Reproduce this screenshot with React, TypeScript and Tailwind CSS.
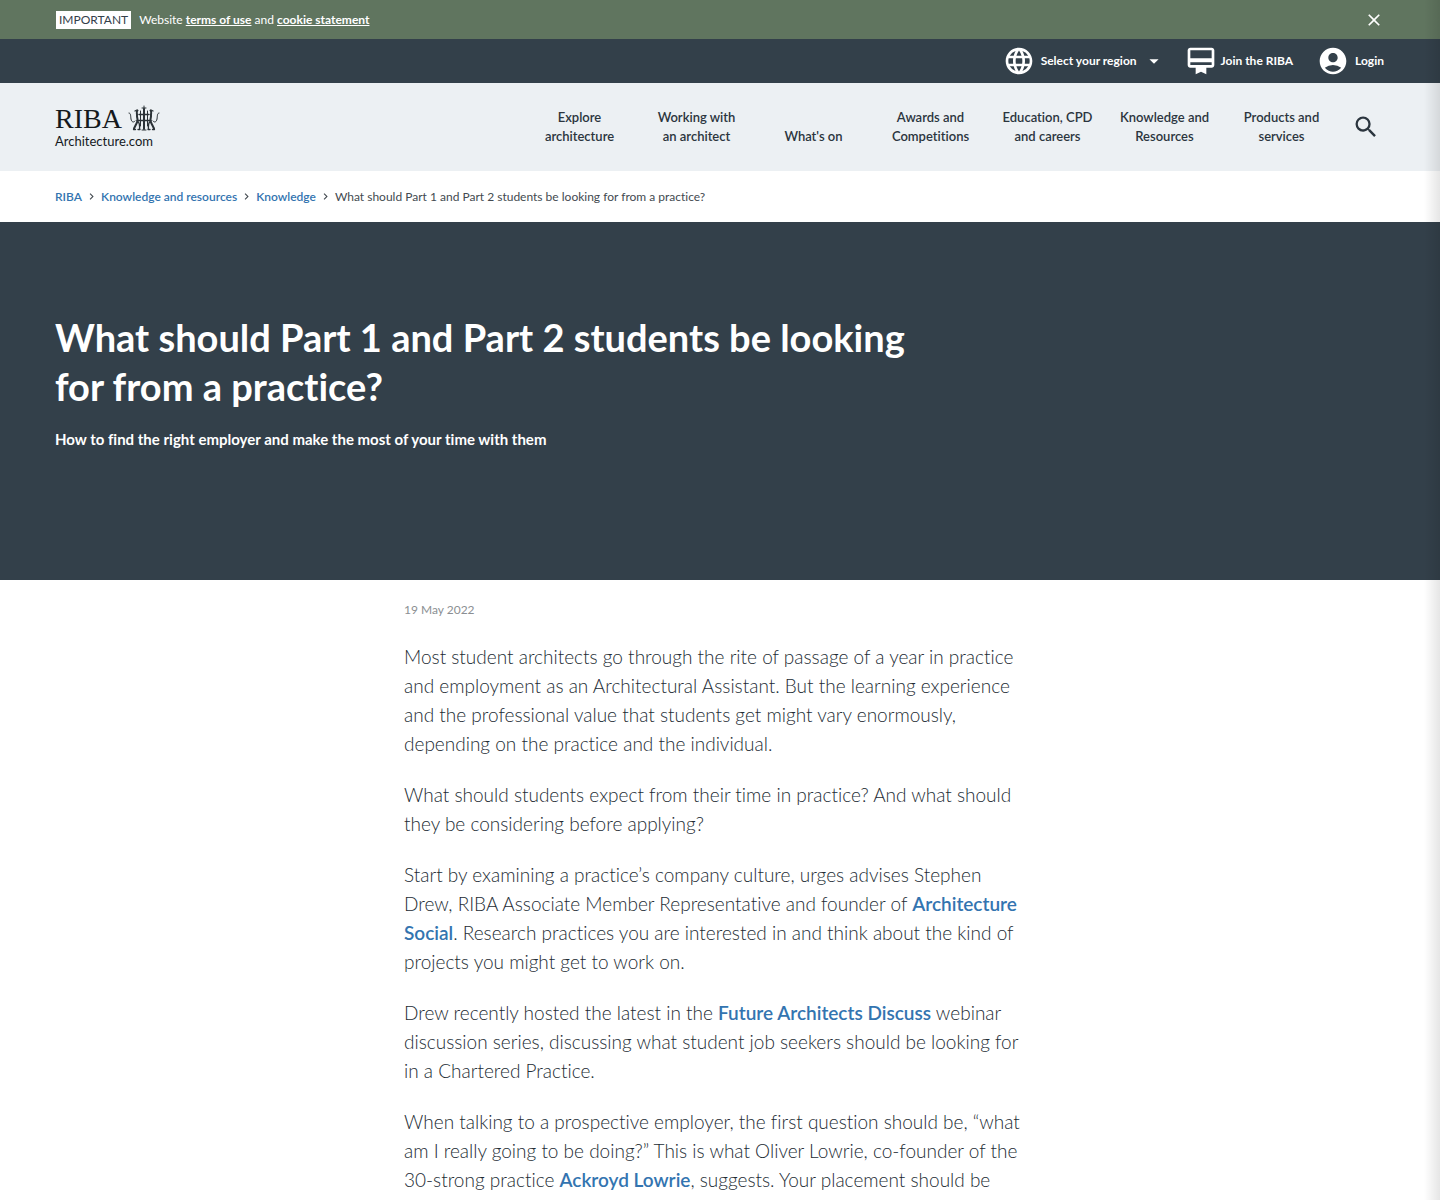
import type { ReactNode } from "react";

// icons
import {
  MdAccountCircle,
  MdArrowDropDown,
  MdCardMembership,
  MdChevronRight,
  MdClose,
  MdLanguage,
  MdSearch,
} from "react-icons/md";

const navItems = [
  ["Explore", "architecture"],
  ["Working with", "an architect"],
  ["What's on"],
  ["Awards and", "Competitions"],
  ["Education, CPD", "and careers"],
  ["Knowledge and", "Resources"],
  ["Products and", "services"],
];

const crumbs = ["RIBA", "Knowledge and resources", "Knowledge"];

const Notice = () => (
  <div className="flex h-[39px] items-center justify-between bg-[#60755f] px-14 text-[12px] text-white">
    <p className="flex items-center gap-2">
      <span className="bg-white px-[3px] text-[12px] leading-[18px] text-[#33404a]">
        IMPORTANT
      </span>
      <span>
        Website{" "}
        <a href="#terms" className="font-bold underline">
          terms of use
        </a>{" "}
        and{" "}
        <a href="#cookies" className="font-bold underline">
          cookie statement
        </a>
      </span>
    </p>
    <button type="button" aria-label="Close">
      <MdClose size={20} />
    </button>
  </div>
);

const UtilityBar = () => (
  <div className="flex h-11 items-center justify-end bg-[#33404a] px-14 text-[12px] font-bold text-white">
    <button type="button" className="mr-5 flex items-center gap-1.5">
      <MdLanguage size={32} />
      <span>Select your region</span>
      <MdArrowDropDown size={22} />
    </button>
    <a href="#join" className="mr-6 flex items-center gap-1">
      <MdCardMembership size={32} />
      Join the RIBA
    </a>
    <a href="#login" className="flex items-center gap-1.5">
      <MdAccountCircle size={32} />
      Login
    </a>
  </div>
);

const Crest = () => (
  <svg
    width="32"
    height="28"
    viewBox="0 0 32 28"
    fill="none"
    stroke="#2b3237"
    strokeLinecap="round"
    strokeLinejoin="round"
    aria-hidden="true"
  >
    <path strokeWidth="2" d="M16 4v20" />
    <path strokeWidth="1" d="M14 3h4M16 1v3M14 25h4" />
    <path strokeWidth="1.500" d="M9 15.500h14M11 9.500h10" />
    {/* supporters */}
    <path strokeWidth="2" d="M9.500 5.500c-1.500 1-.3 3-.5 5s.8 3 .5 5-1 3-2 5l-1.500 3" />
    <path strokeWidth="2" d="M22.500 5.500c1.500 1 .3 3 .5 5s-.8 3-.5 5 1 3 2 5l1.500 3" />
    <path strokeWidth="1.300" d="M10.500 17c1.500 2 .8 4 1.200 7M21.500 17c-1.500 2-.8 4-1.200 7M5.500 24.500h2M26.500 24.500h-2M10 24.500h2M22 24.500h-2M7 6l2-1M25 6l-2-1" />
    {/* tails */}
    <path strokeWidth="1" d="M1 8c2 0 1.500 3 2 6s2.500 4 4 2M31 8c-2 0-1.500 3-2 6s-2.500 4-4 2" />
    <path strokeWidth="1" d="M12.500 6v15M19.500 6v15" />
  </svg>
);

const Header = () => (
  <header className="flex h-22 items-center justify-between bg-[#ecf0f3] pr-[60px] pl-[55px]">
    <a href="#home" className="flex flex-col text-[#15191d]">
      <span className="flex items-center gap-1.5">
        <span className="font-['Liberation_Serif',serif] text-[28px] leading-7">
          RIBA
        </span>
        <Crest />
      </span>
      <span className="text-[13px] leading-4">Architecture.com</span>
    </a>
    <div className="flex items-center">
      <nav className="flex items-end text-center text-[13px] leading-[19px] font-semibold text-[#2b353e]">
        {navItems.map((lines) => (
          <a key={lines[0]} href="#nav" className="w-[117px]">
            {lines.map((line) => (
              <span key={line} className="block">
                {line}
              </span>
            ))}
          </a>
        ))}
      </nav>
      <button type="button" aria-label="Search" className="ml-3 text-[#2b353e]">
        <MdSearch size={28} />
      </button>
    </div>
  </header>
);

const Breadcrumbs = () => (
  <nav className="flex h-[51px] items-center gap-[3px] px-[55px] text-[12px] text-[#434a50]">
    {crumbs.map((crumb) => (
      <span key={crumb} className="flex items-center gap-[3px]">
        <a href="#crumb" className="font-semibold text-[#3374b0]">
          {crumb}
        </a>
        <MdChevronRight size={13} />
      </span>
    ))}
    <span>What should Part 1 and Part 2 students be looking for from a practice?</span>
  </nav>
);

const Hero = () => (
  <section className="bg-[#33404a] px-[55px] pt-[91px] pb-[129px] text-white">
    <h1 className="text-[38px] leading-[49px] font-bold">
      What should Part 1 and Part 2 students be looking
      <br />
      for from a practice?
    </h1>
    <p className="mt-4 text-[15px] leading-6 font-bold">
      How to find the right employer and make the most of your time with them
    </p>
  </section>
);

const TextLink = ({ children }: { children: ReactNode }) => (
  <a href="#link" className="font-semibold text-[#3374b0]">
    {children}
  </a>
);

const Article = () => (
  <main className="mx-auto w-full max-w-[632px] pt-5">
    <p className="text-[12px] leading-5 text-[#8b8f93]">19 May 2022</p>
    <div className="mt-[22px] flex flex-col gap-[22px] text-[19px] leading-[29px] font-light text-[#232c34]">
      <p>
        Most student architects go through the rite of passage of a year in practice
        <br />
        and employment as an Architectural Assistant. But the learning experience
        <br />
        and the professional value that students get might vary enormously,
        <br />
        depending on the practice and the individual.
      </p>
      <p>
        What should students expect from their time in practice? And what should
        <br />
        they be considering before applying?
      </p>
      <p>
        Start by examining a practice’s company culture, urges advises Stephen
        <br />
        Drew, RIBA Associate Member Representative and founder of{" "}
        <TextLink>Architecture</TextLink>
        <br />
        <TextLink>Social</TextLink>. Research practices you are interested in and
        think about the kind of
        <br />
        projects you might get to work on.
      </p>
      <p>
        Drew recently hosted the latest in the{" "}
        <TextLink>Future Architects Discuss</TextLink> webinar
        <br />
        discussion series, discussing what student job seekers should be looking for
        <br />
        in a Chartered Practice.
      </p>
      <p>
        When talking to a prospective employer, the first question should be, “what
        <br />
        am I really going to be doing?” This is what Oliver Lowrie, co-founder of the
        <br />
        30-strong practice <TextLink>Ackroyd Lowrie</TextLink>, suggests. Your
        placement should be
      </p>
    </div>
  </main>
);

const App = () => (
  <div className="relative min-h-screen bg-white font-['Lato',sans-serif] [font-variant-ligatures:none]">
    <Notice />
    <UtilityBar />
    <Header />
    <Breadcrumbs />
    <Hero />
    <Article />
    <div className="pointer-events-none absolute inset-y-0 right-0 w-4 bg-linear-to-l from-black/10 to-transparent" />
  </div>
);

export default App;
